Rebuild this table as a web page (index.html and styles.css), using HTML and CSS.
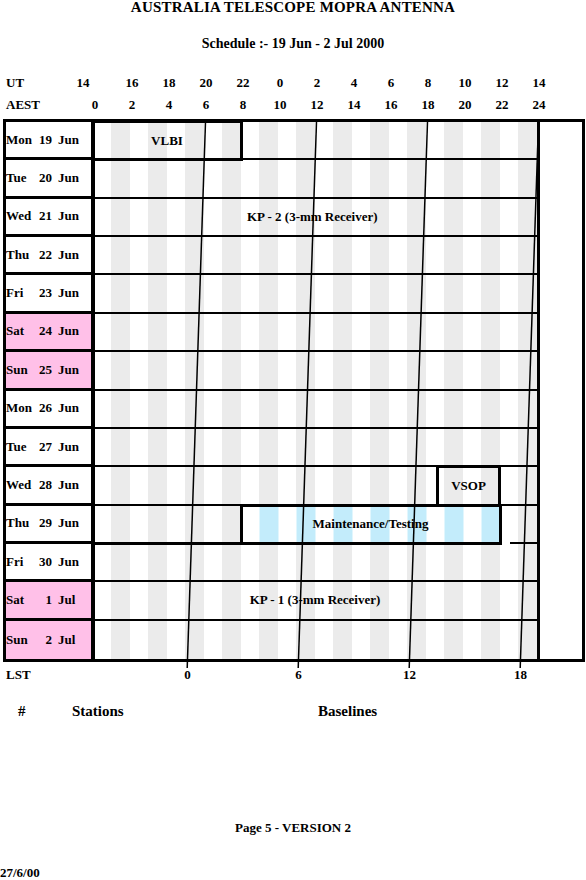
FILE: index.html
```html
<!DOCTYPE html>
<html lang="en">
<head>
    <meta charset="UTF-8">
    <meta name="viewport" content="width=device-width, initial-scale=1.0">
    <title>Mopra Antenna - Schedule Page 5</title>
    <link rel="stylesheet" href="styles.css">
</head>
<body>
    <div class="page">
        <h1 class="title">AUSTRALIA TELESCOPE MOPRA ANTENNA</h1>
        <h2 class="subtitle">Schedule :- 19 Jun - 2 Jul 2000</h2>

        <!-- time scales, one tick every 2 hours -->
        <div class="scale ut">
            <span class="scale-name">UT</span>
            <span class="tick lead">14</span>
            <span class="tick">16</span>
            <span class="tick">18</span>
            <span class="tick">20</span>
            <span class="tick">22</span>
            <span class="tick">0</span>
            <span class="tick">2</span>
            <span class="tick">4</span>
            <span class="tick">6</span>
            <span class="tick">8</span>
            <span class="tick">10</span>
            <span class="tick">12</span>
            <span class="tick">14</span>
        </div>
        <div class="scale aest">
            <span class="scale-name">AEST</span>
            <span class="tick">0</span>
            <span class="tick">2</span>
            <span class="tick">4</span>
            <span class="tick">6</span>
            <span class="tick">8</span>
            <span class="tick">10</span>
            <span class="tick">12</span>
            <span class="tick">14</span>
            <span class="tick">16</span>
            <span class="tick">18</span>
            <span class="tick">20</span>
            <span class="tick">22</span>
            <span class="tick">24</span>
        </div>

        <div class="chart">
            <div class="days">
                <div class="day"><span class="dname">Mon</span><span class="ddate">19</span><span class="dmon">Jun</span></div>
                <div class="day"><span class="dname">Tue</span><span class="ddate">20</span><span class="dmon">Jun</span></div>
                <div class="day"><span class="dname">Wed</span><span class="ddate">21</span><span class="dmon">Jun</span></div>
                <div class="day"><span class="dname">Thu</span><span class="ddate">22</span><span class="dmon">Jun</span></div>
                <div class="day"><span class="dname">Fri</span><span class="ddate">23</span><span class="dmon">Jun</span></div>
                <div class="day weekend"><span class="dname">Sat</span><span class="ddate">24</span><span class="dmon">Jun</span></div>
                <div class="day weekend"><span class="dname">Sun</span><span class="ddate">25</span><span class="dmon">Jun</span></div>
                <div class="day"><span class="dname">Mon</span><span class="ddate">26</span><span class="dmon">Jun</span></div>
                <div class="day"><span class="dname">Tue</span><span class="ddate">27</span><span class="dmon">Jun</span></div>
                <div class="day"><span class="dname">Wed</span><span class="ddate">28</span><span class="dmon">Jun</span></div>
                <div class="day"><span class="dname">Thu</span><span class="ddate">29</span><span class="dmon">Jun</span></div>
                <div class="day"><span class="dname">Fri</span><span class="ddate">30</span><span class="dmon">Jun</span></div>
                <div class="day weekend"><span class="dname">Sat</span><span class="ddate">1</span><span class="dmon">Jul</span></div>
                <div class="day weekend"><span class="dname">Sun</span><span class="ddate">2</span><span class="dmon">Jul</span></div>
            </div>

            <div class="plot">
                <div class="slot"></div>
                <div class="slot"></div>
                <div class="slot"></div>
                <div class="slot"></div>
                <div class="slot"></div>
                <div class="slot"></div>
                <div class="slot"></div>
                <div class="slot"></div>
                <div class="slot"></div>
                <div class="slot"></div>
                <div class="slot open"></div>
                <div class="slot"></div>
                <div class="slot"></div>
                <div class="slot open"></div>

                <!-- bookings: day index, AEST start/end hour -->
                <div class="event" style="--day:0; --from:0; --to:8">VLBI</div>
                <div class="event" style="--day:9; --from:18.6; --to:22">VSOP</div>
                <div class="event maint" style="--day:10; --from:8; --to:22">Maintenance/Testing</div>
                <div class="note" style="--day:2; --at:11.85">KP - 2 (3-mm Receiver)</div>
                <div class="note" style="--day:12; --at:12">KP - 1 (3-mm Receiver)</div>
                <div class="rule thick" style="--day:11; --from:0; --to:8"></div>
                <div class="rule" style="--day:11; --from:22.54; --to:24"></div>

                <!-- LST 0/6/12/18 drifting through the fortnight -->
                <svg class="lst-lines" width="446" height="546" viewBox="0 0 446 546">
                    <line x1="110.5" y1="0" x2="92.2" y2="546"/>
                    <line x1="221.5" y1="0" x2="203.2" y2="546"/>
                    <line x1="332.5" y1="0" x2="314.2" y2="546"/>
                    <line x1="443.5" y1="0" x2="425.2" y2="546"/>
                </svg>
            </div>

            <div class="spare"></div>
        </div>

        <div class="lst">
            <span class="scale-name">LST</span>
            <span class="mark">0</span>
            <span class="mark">6</span>
            <span class="mark">12</span>
            <span class="mark">18</span>
        </div>

        <div class="legend">
            <span>#</span>
            <span>Stations</span>
            <span>Baselines</span>
        </div>

        <p class="footer">Page 5 - VERSION 2</p>
        <p class="date">27/6/00</p>
    </div>
</body>
</html>
```

FILE: styles.css
```css
* { margin: 0; padding: 0; box-sizing: border-box; }
body {
    font: bold 13px "Liberation Serif", "Times New Roman", serif;
    color: #000;
    background: #fff;
}
.page { width: 586px; }

.title {
    font-size: 15px;
    line-height: 15px;
    height: 15px;
    letter-spacing: 0.2px;
    text-align: center;
}
.subtitle {
    margin-top: 22px;
    font-size: 14px;
    line-height: 14px;
    height: 14px;
    text-align: center;
}

.scale {
    display: grid;
    grid-template-columns: 76.5px repeat(13, 37px);
    height: 14px;
    line-height: 14px;
}
.ut { margin-top: 25px; }
.aest { margin-top: 8px; }
.scale-name { padding-left: 6px; }
.tick { text-align: center; }
.tick.lead { text-align: left; }

.chart {
    display: flex;
    margin: 7px 0 0 3px;
    width: 582px;
    height: 543px;
    border: 3px solid #000;
}
.days {
    width: 89px;
    border-right: 4px solid #000;
    display: grid;
    grid-template-rows: repeat(14, 1fr);
}
.day {
    display: flex;
    align-items: center;
    border-bottom: 3px solid #000;
}
.day:last-child { border-bottom: 0; }
.day.weekend { background: #ffc0e8; }
.dname { width: 31px; }
.ddate { width: 15px; text-align: right; }
.dmon { margin-left: 6px; }

.plot {
    position: relative;
    width: 445px;
    border-right: 3px solid #000;
    display: grid;
    grid-template-rows: repeat(14, 1fr);
    background-image: linear-gradient(90deg, #fff 50%, #ebebeb 50%);
    background-size: 37px 100%;
    background-position: -2px 0;
    background-repeat: repeat-x;
}
.slot { border-bottom: 2px solid #000; }
.slot.open { border-bottom: 0; }

/* 18.5px per hour, 38.357px per day, hour 0 sits 2px left of the plot */
.event {
    position: absolute;
    left: calc(var(--from) * 18.5px - 3.5px);
    width: calc((var(--to) - var(--from)) * 18.5px + 3px);
    top: calc(var(--day) * 38.357px - 2px);
    height: 41.357px;
    border: 3px solid #000;
    display: flex;
    align-items: center;
    justify-content: center;
    white-space: nowrap;
}
.event.maint {
    background-image: linear-gradient(90deg, #fff 50%, #c3ecfb 50%);
    background-size: 37px 100%;
    background-position: 1.5px 0;
    background-origin: border-box;
    background-repeat: repeat-x;
}
.note {
    position: absolute;
    left: calc(var(--at) * 18.5px - 2px);
    top: calc(var(--day) * 38.357px);
    height: 36.357px;
    transform: translateX(-50%);
    display: flex;
    align-items: center;
    white-space: nowrap;
}
.rule {
    position: absolute;
    left: calc(var(--from) * 18.5px - 2px);
    width: calc((var(--to) - var(--from)) * 18.5px);
    top: calc(var(--day) * 38.357px - 2px);
    height: 2px;
    background: #000;
}
.rule.thick { height: 3px; }
.lst-lines {
    position: absolute;
    top: 0;
    left: 0;
    overflow: visible;
}
.lst-lines line { stroke: #000; stroke-width: 1.5; }

.spare { flex: 1; }

.lst {
    display: grid;
    grid-template-columns: 132px repeat(4, 111px);
    margin-top: 6px;
    height: 14px;
    line-height: 14px;
}
.lst .mark { text-align: center; }

.legend {
    display: grid;
    grid-template-columns: 54px 246px auto;
    margin-top: 21px;
    padding-left: 18px;
    font-size: 15px;
    height: 16px;
    line-height: 16px;
}

.footer {
    margin-top: 102px;
    height: 14px;
    line-height: 14px;
    text-align: center;
}
.date {
    margin-top: 31px;
    height: 14px;
    line-height: 14px;
}
```
